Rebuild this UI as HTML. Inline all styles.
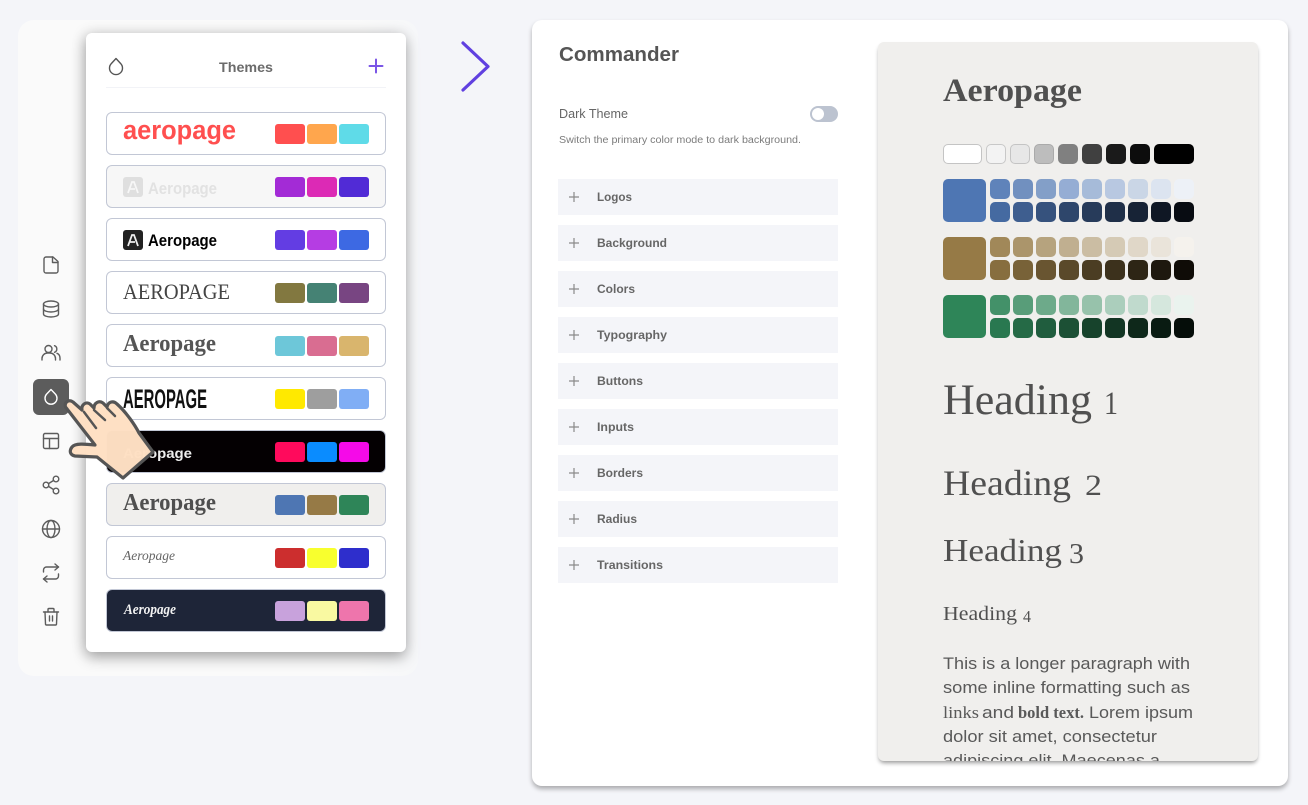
<!DOCTYPE html>
<html lang="en"><head><meta charset="utf-8"><title>Commander Themes</title>
<style>
*{box-sizing:border-box}
html,body{margin:0;padding:0;width:1308px;height:805px;overflow:hidden;background:#f4f5f9;font-family:"Liberation Sans",sans-serif}
.a{position:absolute}
#side{left:18px;top:20px;width:400px;height:656px;border-radius:16px;background:linear-gradient(90deg,#fafafa 0,#fafafa 85%,#f6f7f9 100%)}
#panel{left:86px;top:33px;width:320px;height:619px;background:#fff;border-radius:6px;box-shadow:0 6px 14px rgba(0,0,0,.28),-2px 0 14px rgba(0,0,0,.14)}
.row{position:absolute;left:106px;width:280px;height:43px;border:1px solid #c2c7d5;border-radius:6px;background:#fff}
.sw{position:absolute;width:30px;height:20px;border-radius:3px}
.card{left:532px;top:20px;width:756px;height:766px;background:#fff;border-radius:10px;box-shadow:0 3px 5px rgba(0,0,0,.3)}
.prev{left:878px;top:42px;width:380px;height:719px;background:#f0efed;border-radius:6px;box-shadow:0 3px 4px -1px rgba(0,0,0,.4)}
.acc{position:absolute;left:558px;width:280px;height:36px;background:#f4f5f9}
.p{position:absolute;border-radius:5px}
svg{position:absolute;left:0;top:0}
</style></head><body>
<div class="a" id="side"></div>
<div class="a" id="panel"></div>
<div class="a" style="left:106px;top:87px;width:280px;height:1px;background:#f2f3f7"></div>

<div class="row" style="top:112px"></div>
<div class="row" style="top:165px;background:#f7f7f7"></div>
<div class="row" style="top:218px"></div>
<div class="row" style="top:271px"></div>
<div class="row" style="top:324px"></div>
<div class="row" style="top:377px"></div>
<div class="row" style="top:430px;background:#040002"></div>
<div class="row" style="top:483px;background:#f0efed"></div>
<div class="row" style="top:536px"></div>
<div class="row" style="top:589px;background:#1e2538"></div>

<div class="sw" style="left:275px;top:124px;background:#ff4f4f"></div><div class="sw" style="left:307px;top:124px;background:#ffa64d"></div><div class="sw" style="left:339px;top:124px;background:#5fdbe8"></div>
<div class="sw" style="left:275px;top:177px;background:#a32bd6"></div><div class="sw" style="left:307px;top:177px;background:#dc2ab5"></div><div class="sw" style="left:339px;top:177px;background:#512bd6"></div>
<div class="sw" style="left:275px;top:230px;background:#633de3"></div><div class="sw" style="left:307px;top:230px;background:#b53de3"></div><div class="sw" style="left:339px;top:230px;background:#3d69e3"></div>
<div class="sw" style="left:275px;top:283px;background:#827840"></div><div class="sw" style="left:307px;top:283px;background:#458274"></div><div class="sw" style="left:339px;top:283px;background:#784582"></div>
<div class="sw" style="left:275px;top:336px;background:#6dc7d9"></div><div class="sw" style="left:307px;top:336px;background:#d96d91"></div><div class="sw" style="left:339px;top:336px;background:#d9b56d"></div>
<div class="sw" style="left:275px;top:389px;background:#ffe900"></div><div class="sw" style="left:307px;top:389px;background:#9e9e9e"></div><div class="sw" style="left:339px;top:389px;background:#80aef5"></div>
<div class="sw" style="left:275px;top:442px;background:#ff0a5c"></div><div class="sw" style="left:307px;top:442px;background:#0a8cff"></div><div class="sw" style="left:339px;top:442px;background:#f50ae8"></div>
<div class="sw" style="left:275px;top:495px;background:#4e76b3"></div><div class="sw" style="left:307px;top:495px;background:#967a46"></div><div class="sw" style="left:339px;top:495px;background:#2e8558"></div>
<div class="sw" style="left:275px;top:548px;background:#cc2e2e"></div><div class="sw" style="left:307px;top:548px;background:#f8ff2e"></div><div class="sw" style="left:339px;top:548px;background:#2e2ecc"></div>
<div class="sw" style="left:275px;top:601px;background:#c8a2dc"></div><div class="sw" style="left:307px;top:601px;background:#f9f9a1"></div><div class="sw" style="left:339px;top:601px;background:#ee75ac"></div>

<div class="a" style="left:33px;top:379px;width:36px;height:36px;border-radius:6px;background:#5c5c5c"></div>

<div class="a card"></div>
<div class="a prev"></div>
<div class="a" style="left:810px;top:106px;width:28px;height:16px;border-radius:8px;background:#bcc3d0"></div>
<div class="a" style="left:812px;top:108px;width:12px;height:12px;border-radius:50%;background:#fff"></div>

<div class="acc" style="top:179px"></div><div class="acc" style="top:225px"></div><div class="acc" style="top:271px"></div><div class="acc" style="top:317px"></div><div class="acc" style="top:363px"></div><div class="acc" style="top:409px"></div><div class="acc" style="top:455px"></div><div class="acc" style="top:501px"></div><div class="acc" style="top:547px"></div>

<!-- palette -->
<div class="p" style="left:943px;top:144px;width:39px;height:20px;background:#fff;border:1px solid #c4c4c4"></div>
<div class="p" style="left:986px;top:144px;width:20px;height:20px;background:#f3f3f3;border:1px solid #c8c8c8"></div>
<div class="p" style="left:1010px;top:144px;width:20px;height:20px;background:#e7e7e7;border:1px solid #c4c4c4"></div>
<div class="p" style="left:1034px;top:144px;width:20px;height:20px;background:#bdbdbd;border:1px solid #aaa"></div>
<div class="p" style="left:1058px;top:144px;width:20px;height:20px;background:#808080"></div>
<div class="p" style="left:1082px;top:144px;width:20px;height:20px;background:#404040"></div>
<div class="p" style="left:1106px;top:144px;width:20px;height:20px;background:#1a1a1a"></div>
<div class="p" style="left:1130px;top:144px;width:20px;height:20px;background:#0d0d0d"></div>
<div class="p" style="left:1154px;top:144px;width:40px;height:20px;background:#000"></div>

<div class="p" style="left:943px;top:179px;width:43px;height:43px;background:#4e76b3"></div>
<div class="p" style="left:990px;top:179px;width:20px;height:20px;background:#5f83ba"></div><div class="p" style="left:1013px;top:179px;width:20px;height:20px;background:#7190bf"></div><div class="p" style="left:1036px;top:179px;width:20px;height:20px;background:#839fc8"></div><div class="p" style="left:1059px;top:179px;width:20px;height:20px;background:#95add4"></div><div class="p" style="left:1082px;top:179px;width:20px;height:20px;background:#a6bbd9"></div><div class="p" style="left:1105px;top:179px;width:20px;height:20px;background:#b8c8e1"></div><div class="p" style="left:1128px;top:179px;width:20px;height:20px;background:#cad6e6"></div><div class="p" style="left:1151px;top:179px;width:20px;height:20px;background:#dce4f0"></div><div class="p" style="left:1174px;top:179px;width:20px;height:20px;background:#edf1f7"></div>
<div class="p" style="left:990px;top:202px;width:20px;height:20px;background:#456aa1"></div><div class="p" style="left:1013px;top:202px;width:20px;height:20px;background:#3e5e8f"></div><div class="p" style="left:1036px;top:202px;width:20px;height:20px;background:#36527d"></div><div class="p" style="left:1059px;top:202px;width:20px;height:20px;background:#2e466b"></div><div class="p" style="left:1082px;top:202px;width:20px;height:20px;background:#273b5a"></div><div class="p" style="left:1105px;top:202px;width:20px;height:20px;background:#1f2f48"></div><div class="p" style="left:1128px;top:202px;width:20px;height:20px;background:#172336"></div><div class="p" style="left:1151px;top:202px;width:20px;height:20px;background:#0f1724"></div><div class="p" style="left:1174px;top:202px;width:20px;height:20px;background:#080c12"></div>

<div class="p" style="left:943px;top:237px;width:43px;height:43px;background:#967a46"></div>
<div class="p" style="left:990px;top:237px;width:20px;height:20px;background:#a18859"></div><div class="p" style="left:1013px;top:237px;width:20px;height:20px;background:#ab956b"></div><div class="p" style="left:1036px;top:237px;width:20px;height:20px;background:#b6a37e"></div><div class="p" style="left:1059px;top:237px;width:20px;height:20px;background:#c0af90"></div><div class="p" style="left:1082px;top:237px;width:20px;height:20px;background:#cbbda3"></div><div class="p" style="left:1105px;top:237px;width:20px;height:20px;background:#d5cab5"></div><div class="p" style="left:1128px;top:237px;width:20px;height:20px;background:#e0d7c8"></div><div class="p" style="left:1151px;top:237px;width:20px;height:20px;background:#eae4da"></div><div class="p" style="left:1174px;top:237px;width:20px;height:20px;background:#f5f2ed"></div>
<div class="p" style="left:990px;top:260px;width:20px;height:20px;background:#876e3f"></div><div class="p" style="left:1013px;top:260px;width:20px;height:20px;background:#786238"></div><div class="p" style="left:1036px;top:260px;width:20px;height:20px;background:#695531"></div><div class="p" style="left:1059px;top:260px;width:20px;height:20px;background:#5a492a"></div><div class="p" style="left:1082px;top:260px;width:20px;height:20px;background:#4b3d23"></div><div class="p" style="left:1105px;top:260px;width:20px;height:20px;background:#3c311c"></div><div class="p" style="left:1128px;top:260px;width:20px;height:20px;background:#2d2515"></div><div class="p" style="left:1151px;top:260px;width:20px;height:20px;background:#1e180e"></div><div class="p" style="left:1174px;top:260px;width:20px;height:20px;background:#0f0c07"></div>

<div class="p" style="left:943px;top:295px;width:43px;height:43px;background:#2e8558"></div>
<div class="p" style="left:990px;top:295px;width:20px;height:20px;background:#439169"></div><div class="p" style="left:1013px;top:295px;width:20px;height:20px;background:#589d79"></div><div class="p" style="left:1036px;top:295px;width:20px;height:20px;background:#6daa8a"></div><div class="p" style="left:1059px;top:295px;width:20px;height:20px;background:#82b69b"></div><div class="p" style="left:1082px;top:295px;width:20px;height:20px;background:#97c2ab"></div><div class="p" style="left:1105px;top:295px;width:20px;height:20px;background:#abcebc"></div><div class="p" style="left:1128px;top:295px;width:20px;height:20px;background:#c0dacd"></div><div class="p" style="left:1151px;top:295px;width:20px;height:20px;background:#d5e7dd"></div><div class="p" style="left:1174px;top:295px;width:20px;height:20px;background:#eaf3ee"></div>
<div class="p" style="left:990px;top:318px;width:20px;height:20px;background:#297850"></div><div class="p" style="left:1013px;top:318px;width:20px;height:20px;background:#256a46"></div><div class="p" style="left:1036px;top:318px;width:20px;height:20px;background:#205d3e"></div><div class="p" style="left:1059px;top:318px;width:20px;height:20px;background:#1c5035"></div><div class="p" style="left:1082px;top:318px;width:20px;height:20px;background:#17432c"></div><div class="p" style="left:1105px;top:318px;width:20px;height:20px;background:#123523"></div><div class="p" style="left:1128px;top:318px;width:20px;height:20px;background:#0e281a"></div><div class="p" style="left:1151px;top:318px;width:20px;height:20px;background:#091b12"></div><div class="p" style="left:1174px;top:318px;width:20px;height:20px;background:#050d09"></div>

<svg width="1308" height="805" viewBox="0 0 1308 805" xmlns="http://www.w3.org/2000/svg">
<defs><clipPath id="pc"><rect x="878" y="42" width="380" height="719"/></clipPath></defs>
<!-- sidebar icons -->
<g fill="none" stroke="#5c5c5c" stroke-width="1.4" stroke-linecap="round" stroke-linejoin="round">
<path d="M53 257h-7a2 2 0 0 0-2 2v12a2 2 0 0 0 2 2h10a2 2 0 0 0 2-2v-9.500z"/><path d="M52.500 257v5.500h5.500"/>
<ellipse cx="51" cy="304" rx="7.500" ry="3"/><path d="M43.500 304v10c0 1.700 3.400 3 7.500 3s7.500-1.300 7.500-3v-10"/><path d="M43.500 309c0 1.700 3.400 3 7.500 3s7.500-1.300 7.500-3"/>
<circle cx="48.500" cy="349" r="3.500"/><path d="M42 360v-1.500a5.500 5.500 0 0 1 5.500-5.500h2.500a5.500 5.500 0 0 1 5.500 5.500v1.500"/><path d="M54.500 345.700a3.500 3.500 0 0 1 0 6.600"/><path d="M57 353.300a5 5 0 0 1 3 4.700v2"/>
<path d="M51 389.500l4.300 4.500a6 6 0 1 1-8.600 0z" stroke="#fff"/>
<rect x="43.500" y="433.500" width="15" height="15" rx="1.500"/><path d="M43.500 438.500h15M49.500 438.500v10"/>
<circle cx="56" cy="479" r="2.800"/><circle cx="46" cy="485" r="2.800"/><circle cx="56" cy="491" r="2.800"/><path d="M48.500 483.600l5-3.100M48.500 486.400l5 3.100"/>
<circle cx="51" cy="529" r="8.500"/><path d="M42.500 529h17"/><ellipse cx="51" cy="529" rx="4" ry="8.500"/>
<path d="M55 564l3.500 3-3.500 3"/><path d="M43.500 572v-2a3 3 0 0 1 3-3h12"/><path d="M47 582l-3.500-3 3.500-3"/><path d="M58.500 574v2a3 3 0 0 1-3 3h-12"/>
<path d="M43.500 612h15"/><path d="M48 612v-2.500a1 1 0 0 1 1-1h4a1 1 0 0 1 1 1v2.500"/><path d="M45 612l.500 12a1 1 0 0 0 1 1h9a1 1 0 0 0 1-1l.500-12"/><path d="M49.500 616v5M52.500 616v5"/>
<!-- themes droplet -->
<path d="M116 58.500l4.600 5a6.500 6.500 0 1 1-9.200 0z" stroke="#555"/>
</g>
<path d="M369.500 66h13M376 59.500v13" stroke="#7a55e6" stroke-width="2" fill="none" stroke-linecap="round"/>
<path d="M463 43l25 23.500-25 23.500" fill="none" stroke="#6040e0" stroke-width="3.200" stroke-linecap="round" stroke-linejoin="round"/>

<!-- panel text -->
<text x="219" y="72" font-size="13.500" font-weight="700" fill="#6b6b6b" textLength="54" lengthAdjust="spacingAndGlyphs" font-family="Liberation Sans">Themes</text>

<text x="123" y="139" font-size="27" font-weight="700" fill="#ff4f4f" textLength="113" lengthAdjust="spacingAndGlyphs" font-family="Liberation Sans">aeropage</text>
<rect x="123" y="177" width="20" height="20" rx="3" fill="#dfdfdf"/><path d="M128 193l4-11h2l4 11M130 189h5" stroke="#f7f7f7" stroke-width="1.800" fill="none"/>
<text x="148" y="194" font-size="17" font-weight="700" fill="#e2e2e2" textLength="69" lengthAdjust="spacingAndGlyphs" font-family="Liberation Sans">Aeropage</text>
<rect x="123" y="230" width="20" height="20" rx="3" fill="#222"/><path d="M128 246l4-11h2l4 11M130 242h5" stroke="#eee" stroke-width="1.800" fill="none"/>
<text x="148" y="246" font-size="17" font-weight="700" fill="#000" textLength="69" lengthAdjust="spacingAndGlyphs" font-family="Liberation Sans">Aeropage</text>
<text x="123" y="299" font-size="22" fill="#444" textLength="107" lengthAdjust="spacingAndGlyphs" font-family="Liberation Serif">AEROPAGE</text>
<text x="123" y="351" font-size="24" font-weight="700" fill="#555" textLength="93" lengthAdjust="spacingAndGlyphs" font-family="Liberation Serif">Aeropage</text>
<text x="123" y="408" font-size="26.500" font-weight="700" fill="#111" textLength="84" lengthAdjust="spacingAndGlyphs" font-family="Liberation Sans">AEROPAGE</text>
<text x="123" y="458" font-size="14" font-weight="700" fill="#eee" textLength="69" lengthAdjust="spacingAndGlyphs" font-family="Liberation Sans">Aeropage</text>
<text x="123" y="510" font-size="24" font-weight="700" fill="#4f4f4f" textLength="93" lengthAdjust="spacingAndGlyphs" font-family="Liberation Serif">Aeropage</text>
<text x="123" y="560" font-size="14" font-style="italic" fill="#666" textLength="52" lengthAdjust="spacingAndGlyphs" font-family="Liberation Serif">Aeropage</text>
<text x="124" y="614" font-size="15" font-style="italic" font-weight="700" fill="#f2f2f2" textLength="52" lengthAdjust="spacingAndGlyphs" font-family="Liberation Serif">Aeropage</text>

<!-- commander text -->
<g font-family="Liberation Sans">
<text x="559" y="61" font-size="20" font-weight="700" fill="#555" textLength="120" lengthAdjust="spacingAndGlyphs">Commander</text>
<text x="559" y="118" font-size="12.500" fill="#666" textLength="69" lengthAdjust="spacingAndGlyphs">Dark Theme</text>
<text x="559" y="143" font-size="10" fill="#7c7c7c" textLength="242" lengthAdjust="spacingAndGlyphs">Switch the primary color mode to dark background.</text>
<g font-size="12" font-weight="700" fill="#666">
<text x="597" y="201" textLength="35" lengthAdjust="spacingAndGlyphs">Logos</text>
<text x="597" y="247" textLength="70" lengthAdjust="spacingAndGlyphs">Background</text>
<text x="597" y="293" textLength="38" lengthAdjust="spacingAndGlyphs">Colors</text>
<text x="597" y="339" textLength="70" lengthAdjust="spacingAndGlyphs">Typography</text>
<text x="597" y="385" textLength="46" lengthAdjust="spacingAndGlyphs">Buttons</text>
<text x="597" y="431" textLength="37" lengthAdjust="spacingAndGlyphs">Inputs</text>
<text x="597" y="477" textLength="46" lengthAdjust="spacingAndGlyphs">Borders</text>
<text x="597" y="523" textLength="40" lengthAdjust="spacingAndGlyphs">Radius</text>
<text x="597" y="569" textLength="66" lengthAdjust="spacingAndGlyphs">Transitions</text>
</g></g>
<path d="M569 197h10M574 192v10M569 243h10M574 238v10M569 289h10M574 284v10M569 335h10M574 330v10M569 381h10M574 376v10M569 427h10M574 422v10M569 473h10M574 468v10M569 519h10M574 514v10M569 565h10M574 560v10" stroke="#8a8a8a" stroke-width="1.200" fill="none"/>

<!-- preview text -->
<g font-family="Liberation Serif" fill="#505050">
<text x="943" y="101" font-size="33" font-weight="700" textLength="139" lengthAdjust="spacingAndGlyphs">Aeropage</text>
<text x="943" y="414" font-size="43" textLength="149" lengthAdjust="spacingAndGlyphs">Heading</text><text x="1104" y="414" font-size="33" textLength="14" lengthAdjust="spacingAndGlyphs">1</text>
<text x="943" y="495" font-size="36" textLength="128" lengthAdjust="spacingAndGlyphs">Heading</text><text x="1085" y="495" font-size="30" textLength="17" lengthAdjust="spacingAndGlyphs">2</text>
<text x="943" y="561" font-size="32" textLength="119" lengthAdjust="spacingAndGlyphs">Heading</text><text x="1069" y="563" font-size="28" textLength="15" lengthAdjust="spacingAndGlyphs">3</text>
<text x="943" y="620" font-size="20" textLength="74" lengthAdjust="spacingAndGlyphs">Heading</text><text x="1023" y="622" font-size="17" textLength="8" lengthAdjust="spacingAndGlyphs">4</text>
</g>
<g clip-path="url(#pc)" font-size="16.500" fill="#595959" font-family="Liberation Sans">
<text x="943" y="669" textLength="247" lengthAdjust="spacingAndGlyphs">This is a longer paragraph with</text>
<text x="943" y="693" textLength="247" lengthAdjust="spacingAndGlyphs">some inline formatting such as</text>
<text x="943" y="718" font-family="Liberation Serif" textLength="36" lengthAdjust="spacingAndGlyphs">links</text>
<text x="982" y="718" textLength="32" lengthAdjust="spacingAndGlyphs">and</text>
<text x="1018" y="718" font-family="Liberation Serif" font-weight="700" textLength="66" lengthAdjust="spacingAndGlyphs">bold text.</text>
<text x="1089" y="718" textLength="104" lengthAdjust="spacingAndGlyphs">Lorem ipsum</text>
<text x="943" y="742" textLength="214" lengthAdjust="spacingAndGlyphs">dolor sit amet, consectetur</text>
<text x="943" y="766" textLength="217" lengthAdjust="spacingAndGlyphs">adipiscing elit. Maecenas a</text>
</g>

<!-- hand -->
<path d="M65.500 407C64 402 69 399 73 402L82 410C81 405 86 401 90 404L94 408C94 403 99 400 103 403L107 407C108 402 113 400 117 404C126 412 135 425 139 433L153 452L123 478L97 457L75 456C70 455 69 451 72 447C75 443 85 444 95 445Z" fill="#fedfc3" fill-opacity=".985" stroke="#555" stroke-width="3.200" stroke-linejoin="round"/>
<path d="M84 412L96 428M94 410L105 420M107 408L115 416" stroke="#555" stroke-width="2.500" fill="none" stroke-linecap="round"/>
</svg>
</body></html>
